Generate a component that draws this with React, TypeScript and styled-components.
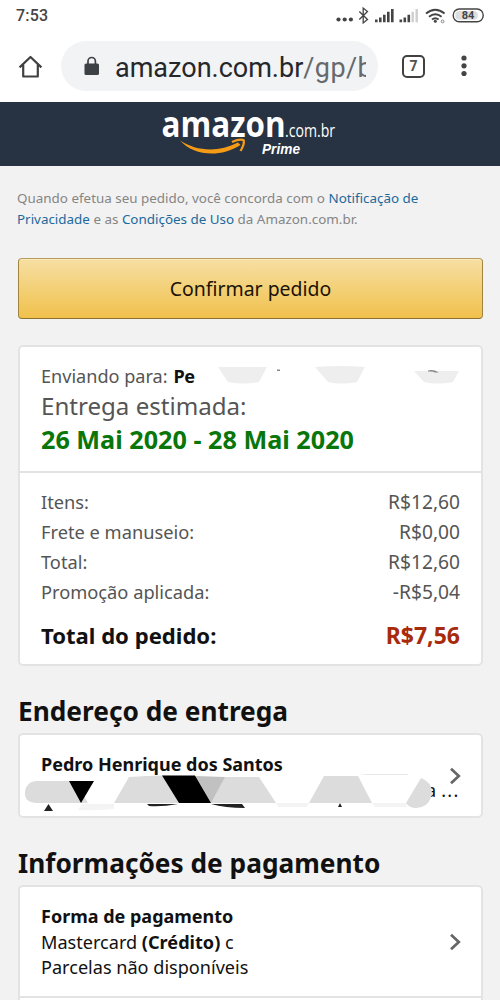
import React from 'react';
import styled, { createGlobalStyle } from 'styled-components';

const GlobalStyle = createGlobalStyle`
  * { box-sizing: border-box; }
  body { margin: 0; background: #f2f2f2; overflow: hidden; }
`;

const Screen = styled.div`
  width: 500px;
  height: 1000px;
  overflow: hidden;
  display: flex;
  flex-direction: column;
  background: #f2f2f2;
  color: #111;
  font-family: 'Noto Sans', sans-serif;
`;

const StatusBar = styled.header`
  flex: none;
  height: 32px;
  padding: 0 14px 0 16px;
  display: flex;
  align-items: center;
  justify-content: space-between;
  background: #fff;
`;

const Clock = styled.span`
  font: 500 16px/32px Roboto, sans-serif;
  letter-spacing: 0.2px;
  color: #444;
`;

const BrowserBar = styled.div`
  flex: none;
  height: 70px;
  display: flex;
  align-items: flex-start;
  padding: 9px 0 0 18px;
  background: #fff;
`;

const IconSlot = styled.div<{ $width: number; $indent?: number }>`
  width: ${p => p.$width}px;
  height: 50px;
  padding-left: ${p => p.$indent ?? 0}px;
  display: flex;
  align-items: center;
`;

const AddressBar = styled.div`
  width: 317px;
  height: 50px;
  display: flex;
  align-items: center;
  gap: 15px;
  padding: 0 12px 0 22px;
  border-radius: 25px;
  background: #f1f3f5;
`;

const Url = styled.div`
  width: 251px;
  overflow: hidden;
  white-space: nowrap;
  font: 400 27px/46px Roboto, sans-serif;
  padding-top: 3px;
  color: #26272a;
  span { color: #66696d; letter-spacing: 0.4px; }
`;

const TabCount = styled.div`
  width: 23px;
  height: 23px;
  border: 2px solid #414141;
  border-radius: 5px;
  text-align: center;
  font: 700 14px/19px Roboto, sans-serif;
  color: #505050;
`;

const StoreBar = styled.div`
  flex: none;
  height: 64px;
  background: #273342;
`;

const Main = styled.main`
  padding: 22px 17px 0 18px;
  display: flex;
  flex-direction: column;
`;

const Legal = styled.p`
  margin: 0 0 27px -1px;
  font-size: 13.42px;
  line-height: 21px;
  height: 43px;
  color: #858585;
  white-space: nowrap;
`;

const Link = styled.a`
  color: #1c6a9c;
`;

const ConfirmButton = styled.button`
  height: 61px;
  padding: 0;
  border: 1px solid;
  border-color: #b79c5c #a1843f #8c722f;
  border-radius: 4px;
  background: linear-gradient(#f7dfa3, #f0c14c);
  box-shadow: inset 0 1px 0 #fae9bd;
  font: 400 19.45px/58px 'Noto Sans', sans-serif;
  color: #1c1203;
`;

const Card = styled.section<{ $height: number; $gap?: number }>`
  flex: none;
  height: ${p => p.$height}px;
  margin-top: ${p => p.$gap ?? 0}px;
  border: 2px solid #e3e3e3;
  border-radius: 5px;
  background: #fff;
`;

const Shipping = styled.div`
  height: 126px;
  padding: 17px 0 0 21px;
  border-bottom: 2px solid #e3e3e3;
  color: #555;
`;

const Recipient = styled.div`
  display: flex;
  align-items: center;
  gap: 6px;
  height: 24px;
  font-size: 18.1px;
  b { color: #111; letter-spacing: -0.6px; width: 21px; overflow: hidden; white-space: nowrap; }
  svg { margin: -3px 0 0 13px; }
`;

const EstimateLabel = styled.div`
  font-size: 24.1px;
  line-height: 35px;
`;

const EstimateDates = styled.div`
  font-size: 25.2px;
  font-weight: 700;
  line-height: 33px;
  color: #087608;
`;

const Costs = styled.div`
  padding: 14px 21px 0;
  color: #555;
`;

const CostRow = styled.div`
  display: flex;
  justify-content: space-between;
  font-size: 18.25px;
  line-height: 30px;
  height: 30px;
`;

const Amount = styled.span`
  font-size: 19.2px;
`;

const OrderTotal = styled.div`
  display: flex;
  justify-content: space-between;
  margin-top: 11px;
  font-size: 22.1px;
  font-weight: 700;
  line-height: 34px;
  color: #111;
`;

const TotalAmount = styled.span`
  font-size: 23px;
  color: #a82a0c;
`;

const SectionTitle = styled.h2`
  margin: 24px 0 0;
  height: 43px;
  font-size: 26.25px;
  font-weight: 700;
  line-height: 43px;
`;

const LinkRow = styled.div<{ $height: number }>`
  position: relative;
  height: ${p => p.$height}px;
  padding: 16px 20px 0 21px;
  display: flex;
  justify-content: space-between;
  font-size: 18.1px;
  line-height: 25.5px;
`;

const RowText = styled.div`
  flex: 1;
  min-width: 0;
  padding-top: 1px;
  white-space: nowrap;
`;

const RowTitle = styled.div`
  font-weight: 700;
  font-size: 18px;
`;

const Redaction = styled.svg`
  position: absolute;
  left: 4px;
  top: 38px;
`;

const AddressTail = styled.div`
  padding-left: 385px;
  span { margin-left: 5px; letter-spacing: 1.3px; }
`;

const ChevronSlot = styled.div<{ $top: number }>`
  margin-top: ${p => p.$top}px;
  width: 13px;
  flex: none;
`;

const Divider = styled.div`
  border-top: 2px solid #e3e3e3;
`;

const StatusIcons = () => (
  <svg width="152" height="24" viewBox="334 4 152 24" fill="#444">
    <circle cx="338.5" cy="19.5" r="2.1" />
    <circle cx="344.7" cy="19.5" r="2.1" />
    <circle cx="350.9" cy="19.5" r="2.1" />
    <path d="M359.3 11.5l8.2 8-4.3 3.5V8l4.3 3.5-8.2 8" fill="none" stroke="#444" strokeWidth="1.3" />
    <path d="M375 19.5h2.6v2.8H375zM379 17.4h2.6v4.9H379zM383 14.7h2.6v7.6H383zM387 11.8h2.6v10.5H387zM391 9h2.6v13.3H391z" />
    <path d="M399.5 19.5h2.6v2.8h-2.6zM403.5 17.4h2.6v4.9h-2.6zM407.5 14.7h2.6v7.6h-2.6z" />
    <path d="M411.5 11.8h2.4v10.5h-2.4zM415.5 9h2.4v13.3h-2.4z" fill="#cfcfcf" />
    <path d="M426 13.5q9.3-7.6 18.6 0M429 16.7q6.3-5 12.6 0M432 19.5q3.3-2.6 6.6 0" fill="none" stroke="#444" strokeWidth="1.9" />
    <circle cx="435.3" cy="21.3" r="1.5" />
    <circle cx="442.6" cy="21.4" r="1.4" fill="none" stroke="#777" strokeWidth="0.9" />
    <rect x="453.2" y="9" width="30" height="12.8" rx="6.2" fill="#fff" stroke="#444" strokeWidth="1.4" />
    <rect x="455.3" y="11" width="22.5" height="8.8" rx="4" fill="#dedede" />
    <text x="468" y="19.4" textAnchor="middle" fontFamily="Roboto" fontWeight="700" fontSize="11">84</text>
  </svg>
);

const HomeIcon = () => (
  <svg width="26" height="26" viewBox="0 -1 26 26" fill="none" stroke="#414141" strokeWidth="2.2">
    <path d="M1.6 13.4L12.5 3l10.9 10.4M5.2 10.7v11.8h14.6V10.7" strokeLinejoin="round" />
  </svg>
);

const LockIcon = () => (
  <svg width="17" height="22" viewBox="0 -1 17 22">
    <rect x="1.5" y="7.5" width="14.5" height="11.5" rx="1.6" fill="#3d4044" />
    <path d="M5 8V5.2a3.7 3.7 0 0 1 7.4 0V8" fill="none" stroke="#3d4044" strokeWidth="1.7" />
  </svg>
);

const StoreLogo = () => (
  <svg width="500" height="64" viewBox="0 102 500 64">
    <g fill="#fff">
      <text x="161.5" y="137" fontFamily="Open Sans" fontWeight="700" fontSize="35" textLength="124" lengthAdjust="spacingAndGlyphs">amazon</text>
      <text x="285" y="136.5" fontFamily="Open Sans" fontSize="17.5" textLength="50" lengthAdjust="spacingAndGlyphs">.com.br</text>
      <text x="262" y="154" fontFamily="Liberation Sans" fontWeight="700" fontStyle="italic" fontSize="14" textLength="38" lengthAdjust="spacingAndGlyphs">Prime</text>
    </g>
    <path d="M180 140.500C196 151 218 153 238 142.500L240.500 145C220 158 194 156 180 140.500z" fill="#f59b16" />
    <path d="M232 142Q240 138.500 243.700 140.200Q244.500 144.500 240.500 151" fill="none" stroke="#f59b16" strokeWidth="2.3" />
  </svg>
);

const Chevron = () => (
  <svg width="13" height="18" viewBox="0 0 13 18" fill="none" stroke="#666" strokeWidth="2.7">
    <path d="M3 1.700l7.800 7.300-7.800 7.300" />
  </svg>
);

const costs = [
  ['Itens:', 'R$12,60'],
  ['Frete e manuseio:', 'R$0,00'],
  ['Total:', 'R$12,60'],
  ['Promoção aplicada:', '-R$5,04'],
];

export default function App() {
  return (
    <Screen>
      <GlobalStyle />
      <StatusBar>
        <Clock>7:53</Clock>
        <StatusIcons />
      </StatusBar>
      <BrowserBar>
        <IconSlot $width={43}><HomeIcon /></IconSlot>
        <AddressBar>
          <LockIcon />
          <Url>amazon.com.br<span>/gp/b</span></Url>
        </AddressBar>
        <IconSlot $width={80} $indent={24}><TabCount>7</TabCount></IconSlot>
        <IconSlot $width={12}>
          <svg width="12" height="24" fill="#444">
            <circle cx="6" cy="4" r="2.6" />
            <circle cx="6" cy="11.8" r="2.6" />
            <circle cx="6" cy="19.5" r="2.6" />
          </svg>
        </IconSlot>
      </BrowserBar>
      <StoreBar><StoreLogo /></StoreBar>
      <Main>
        <Legal>
          Quando efetua seu pedido, você concorda com o <Link>Notificação de<br />Privacidade</Link> e as <Link>Condições de Uso</Link> da Amazon.com.br.
        </Legal>
        <ConfirmButton>Confirmar pedido</ConfirmButton>
        <Card $height={321} $gap={26}>
          <Shipping>
            <Recipient>
              Enviando para: <b>Pe</b>
              <svg width="250" height="20" viewBox="214 364 250 20" fill="#eee">
                <path d="M218 366h49l-8 15q-16 3-31 0zM315 366q26-2 50 0l-8 15q-15 3-29 0zM414 370h45l-6 11q-15 3-29 0z" />
                <path d="M277 368.500h3v1.500h-3zM428 369.500q5-1.500 11 2h-4q-2-1.500-7-1z" fill="#888" />
              </svg>
            </Recipient>
            <EstimateLabel>Entrega estimada:</EstimateLabel>
            <EstimateDates>26 Mai 2020 - 28 Mai 2020</EstimateDates>
          </Shipping>
          <Costs>
            {costs.map(([label, amount]) => (
              <CostRow key={label}><span>{label}</span><Amount>{amount}</Amount></CostRow>
            ))}
            <OrderTotal><span>Total do pedido:</span><TotalAmount>R$7,56</TotalAmount></OrderTotal>
          </Costs>
        </Card>
        <SectionTitle>Endereço de entrega</SectionTitle>
        <Card $height={85}>
          <LinkRow $height={81}>
            <RowText>
              <RowTitle>Pedro Henrique dos Santos</RowTitle>
              <AddressTail>a<span>...</span></AddressTail>
            </RowText>
            <Redaction width="420" height="40" viewBox="24 773 420 40">
              <path d="M36 781h40l12 22H38q-14 0-13-11 1-10 11-11z" fill="#dcdcdc" />
              <path d="M76 780h18l34-3-14 26H88z" fill="#fff" />
              <path d="M129 777q35-3 72 0h58l17 26H114z" fill="#dcdcdc" />
              <path d="M196 776l29 1-14 26z" fill="#c1c1c1" />
              <path d="M162 775.500h33l16 27.500h-32zM69 781h25l-13 22z" />
              <path d="M44 811l4.500-7 4.500 7zM147 804h31q-16 3-29 2zM211 804h31l3 4q-20 0-34-4zM338 807l2-4 2 4z" fill="#222" />
              <path d="M324 776h34l14 27h-63z" fill="#dcdcdc" />
              <path d="M421 778q11 4 11 15-2 14-16 15-7 0-10-5z" fill="#dcdcdc" />
              <path d="M82 804h32v5q-18 2-36 1zM276 803h33l-2 4h-29zM372 803h34l1 4h-32z" fill="#f4f4f4" />
              <path d="M358 775h50v-1h-40z" fill="#e8e8e8" />
            </Redaction>
            <ChevronSlot $top={15}><Chevron /></ChevronSlot>
          </LinkRow>
        </Card>
        <SectionTitle>Informações de pagamento</SectionTitle>
        <Card $height={140}>
          <LinkRow $height={109}>
            <RowText>
              <RowTitle>Forma de pagamento</RowTitle>
              <div>Mastercard <b>(Crédito)</b> c</div>
              <div>Parcelas não disponíveis</div>
            </RowText>
            <ChevronSlot $top={29}><Chevron /></ChevronSlot>
          </LinkRow>
          <Divider />
        </Card>
      </Main>
    </Screen>
  );
}
